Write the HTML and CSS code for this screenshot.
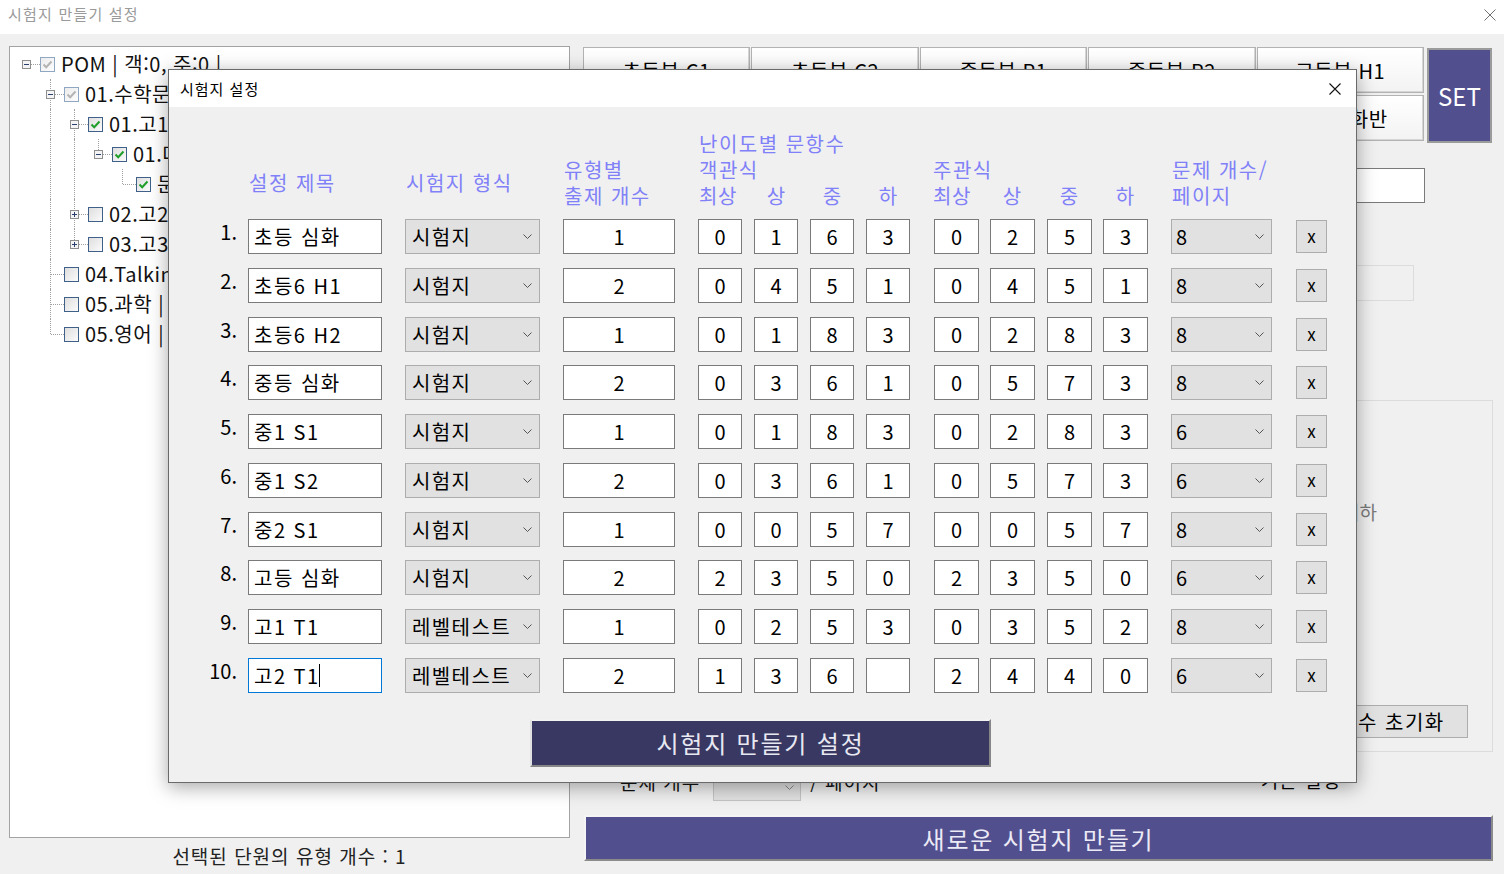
FILE: index.html
```html
<!DOCTYPE html>
<html lang="ko">
<head>
<meta charset="utf-8">
<title>시험지 만들기 설정</title>
<link rel="stylesheet" href="styles.css">
</head>
<body>
<div class="window">
  <div class="titlebar">
    <span class="title">시험지 만들기 설정</span>
    <svg class="win-close" width="12" height="12" viewBox="0 0 12 12"><path d="M0.5 0.5 L11.5 11.5 M11.5 0.5 L0.5 11.5" stroke="#707070" stroke-width="1" fill="none"/></svg>
  </div>

  <div class="content">
    <div class="leftcol">
      <div class="tree">
        <div class="node">
          <span class="cell h"><svg class="exp" width="9" height="9" viewBox="0 0 9 9"><rect x="0.5" y="0.5" width="8" height="8" fill="#f4f4f4" stroke="#8e8e8e"/><path d="M2 4.5 H7" stroke="#2a3f6e"/></svg></span>
          <span class="cb gray"><svg width="13" height="13" viewBox="0 0 13 13"><path d="M2.5 6.5 L5.2 9.2 L10.5 3.5" stroke="#b4b4b4" stroke-width="2" fill="none"/></svg></span>
          <span class="label">POM | 객:0, 주:0 |</span>
        </div>
        <div class="node">
          <span class="cell"></span>
          <span class="cell up down h"><svg class="exp" width="9" height="9" viewBox="0 0 9 9"><rect x="0.5" y="0.5" width="8" height="8" fill="#f4f4f4" stroke="#8e8e8e"/><path d="M2 4.5 H7" stroke="#2a3f6e"/></svg></span>
          <span class="cb gray"><svg width="13" height="13" viewBox="0 0 13 13"><path d="M2.5 6.5 L5.2 9.2 L10.5 3.5" stroke="#b4b4b4" stroke-width="2" fill="none"/></svg></span>
          <span class="label">01.수학문</span>
        </div>
        <div class="node">
          <span class="cell"></span>
          <span class="cell v"></span>
          <span class="cell up down h"><svg class="exp" width="9" height="9" viewBox="0 0 9 9"><rect x="0.5" y="0.5" width="8" height="8" fill="#f4f4f4" stroke="#8e8e8e"/><path d="M2 4.5 H7" stroke="#2a3f6e"/></svg></span>
          <span class="cb"><svg width="13" height="13" viewBox="0 0 13 13"><path d="M2.5 6.5 L5.2 9.2 L10.5 3.5" stroke="#1f9e2a" stroke-width="2" fill="none"/></svg></span>
          <span class="label">01.고1</span>
        </div>
        <div class="node">
          <span class="cell"></span>
          <span class="cell v"></span>
          <span class="cell v"></span>
          <span class="cell up h"><svg class="exp" width="9" height="9" viewBox="0 0 9 9"><rect x="0.5" y="0.5" width="8" height="8" fill="#f4f4f4" stroke="#8e8e8e"/><path d="M2 4.5 H7" stroke="#2a3f6e"/></svg></span>
          <span class="cb"><svg width="13" height="13" viewBox="0 0 13 13"><path d="M2.5 6.5 L5.2 9.2 L10.5 3.5" stroke="#1f9e2a" stroke-width="2" fill="none"/></svg></span>
          <span class="label">01.다항식</span>
        </div>
        <div class="node">
          <span class="cell"></span>
          <span class="cell v"></span>
          <span class="cell v"></span>
          <span class="cell"></span>
          <span class="cell up h"></span>
          <span class="cb"><svg width="13" height="13" viewBox="0 0 13 13"><path d="M2.5 6.5 L5.2 9.2 L10.5 3.5" stroke="#1f9e2a" stroke-width="2" fill="none"/></svg></span>
          <span class="label">문제</span>
        </div>
        <div class="node">
          <span class="cell"></span>
          <span class="cell v"></span>
          <span class="cell up down h"><svg class="exp" width="9" height="9" viewBox="0 0 9 9"><rect x="0.5" y="0.5" width="8" height="8" fill="#f4f4f4" stroke="#8e8e8e"/><path d="M2 4.5 H7 M4.5 2 V7" stroke="#2a3f6e"/></svg></span>
          <span class="cb"></span>
          <span class="label">02.고2</span>
        </div>
        <div class="node">
          <span class="cell"></span>
          <span class="cell v"></span>
          <span class="cell up h"><svg class="exp" width="9" height="9" viewBox="0 0 9 9"><rect x="0.5" y="0.5" width="8" height="8" fill="#f4f4f4" stroke="#8e8e8e"/><path d="M2 4.5 H7 M4.5 2 V7" stroke="#2a3f6e"/></svg></span>
          <span class="cb"></span>
          <span class="label">03.고3</span>
        </div>
        <div class="node">
          <span class="cell"></span>
          <span class="cell up down h"></span>
          <span class="cb"></span>
          <span class="label">04.Talking</span>
        </div>
        <div class="node">
          <span class="cell"></span>
          <span class="cell up down h"></span>
          <span class="cb"></span>
          <span class="label">05.과학 |</span>
        </div>
        <div class="node">
          <span class="cell"></span>
          <span class="cell up h"></span>
          <span class="cb"></span>
          <span class="label">05.영어 |</span>
        </div>
      </div>
      <div class="count-label">선택된 단원의 유형 개수 : 1</div>
    </div>

    <div class="rightcol">
      <div class="tabs-area">
        <div class="tabs">
          <div class="tab">초등부 C1</div>
          <div class="tab">초등부 C2</div>
          <div class="tab">중등부 P1</div>
          <div class="tab">중등부 P2</div>
          <div class="tab">고등부 H1</div>
          <div class="tab">초등 심화반</div>
          <div class="tab">초등 기본반</div>
          <div class="tab">중등 심화반</div>
          <div class="tab">중등 기본반</div>
          <div class="tab">고등심화반</div>
        </div>
        <div class="set-btn">SET</div>
      </div>
      <div class="name-row">
        <div class="name-box"></div>
      </div>
      <div class="faint-row">
        <div class="faint-box"></div>
      </div>
      <div class="group">
        <div class="group-line">이하</div>
        <div class="reset-btn">문항수 초기화</div>
      </div>
      <div class="page-row">
        <span class="field-label up">문제 개수</span>
        <div class="mini-sel"><svg width="9" height="5" viewBox="0 0 9 5"><path d="M0.5 0.5 L4.5 4.5 L8.5 0.5" stroke="#8a8a8a" fill="none"/></svg></div>
        <span class="field-label up">/ 페이지</span>
        <span class="page-right">기본 설정</span>
      </div>
      <div class="new-btn">새로운 시험지 만들기</div>
    </div>
  </div>

  <div class="dialog">
    <div class="dlg-title">
      <span class="dlg-name">시험지 설정</span>
      <svg width="12" height="12" viewBox="0 0 12 12"><path d="M0.5 0.5 L11.5 11.5 M11.5 0.5 L0.5 11.5" stroke="#111" stroke-width="1.1" fill="none"/></svg>
    </div>
    <div class="dlg-body">
      <div class="hdr-grid">
        <div class="hd col2 rows23 mid">설정 제목</div>
        <div class="hd col3 rows23 mid">시험지 형식</div>
        <div class="hd col4 rows23">유형별<br>출제 개수</div>
        <div class="hd span-diff">난이도별 문항수</div>
        <div class="hd span-obj">객관식</div>
        <div class="hd span-sub">주관식</div>
        <div class="hd col13 rows23">문제 개수/<br>페이지</div>
        <div class="hd lv col5 first">최상</div>
        <div class="hd lv col6">상</div>
        <div class="hd lv col7">중</div>
        <div class="hd lv col8">하</div>
        <div class="hd lv col9 first sub">최상</div>
        <div class="hd lv col10">상</div>
        <div class="hd lv col11">중</div>
        <div class="hd lv col12">하</div>
      </div>

      <div class="rows">
        <div class="num">1.</div><div class="tbox">초등 심화</div><div class="sel">시험지<svg width="9" height="5" viewBox="0 0 9 5"><path d="M0.5 0.5 L4.5 4.5 L8.5 0.5" stroke="#555" fill="none"/></svg></div><div class="cnt">1</div>
        <div class="nb">0</div><div class="nb">1</div><div class="nb">6</div><div class="nb">3</div>
        <div class="nb">0</div><div class="nb">2</div><div class="nb">5</div><div class="nb">3</div>
        <div class="psel">8<svg width="9" height="5" viewBox="0 0 9 5"><path d="M0.5 0.5 L4.5 4.5 L8.5 0.5" stroke="#555" fill="none"/></svg></div><div class="xbtn">x</div>

        <div class="num">2.</div><div class="tbox">초등6 H1</div><div class="sel">시험지<svg width="9" height="5" viewBox="0 0 9 5"><path d="M0.5 0.5 L4.5 4.5 L8.5 0.5" stroke="#555" fill="none"/></svg></div><div class="cnt">2</div>
        <div class="nb">0</div><div class="nb">4</div><div class="nb">5</div><div class="nb">1</div>
        <div class="nb">0</div><div class="nb">4</div><div class="nb">5</div><div class="nb">1</div>
        <div class="psel">8<svg width="9" height="5" viewBox="0 0 9 5"><path d="M0.5 0.5 L4.5 4.5 L8.5 0.5" stroke="#555" fill="none"/></svg></div><div class="xbtn">x</div>

        <div class="num">3.</div><div class="tbox">초등6 H2</div><div class="sel">시험지<svg width="9" height="5" viewBox="0 0 9 5"><path d="M0.5 0.5 L4.5 4.5 L8.5 0.5" stroke="#555" fill="none"/></svg></div><div class="cnt">1</div>
        <div class="nb">0</div><div class="nb">1</div><div class="nb">8</div><div class="nb">3</div>
        <div class="nb">0</div><div class="nb">2</div><div class="nb">8</div><div class="nb">3</div>
        <div class="psel">8<svg width="9" height="5" viewBox="0 0 9 5"><path d="M0.5 0.5 L4.5 4.5 L8.5 0.5" stroke="#555" fill="none"/></svg></div><div class="xbtn">x</div>

        <div class="num">4.</div><div class="tbox">중등 심화</div><div class="sel">시험지<svg width="9" height="5" viewBox="0 0 9 5"><path d="M0.5 0.5 L4.5 4.5 L8.5 0.5" stroke="#555" fill="none"/></svg></div><div class="cnt">2</div>
        <div class="nb">0</div><div class="nb">3</div><div class="nb">6</div><div class="nb">1</div>
        <div class="nb">0</div><div class="nb">5</div><div class="nb">7</div><div class="nb">3</div>
        <div class="psel">8<svg width="9" height="5" viewBox="0 0 9 5"><path d="M0.5 0.5 L4.5 4.5 L8.5 0.5" stroke="#555" fill="none"/></svg></div><div class="xbtn">x</div>

        <div class="num">5.</div><div class="tbox">중1 S1</div><div class="sel">시험지<svg width="9" height="5" viewBox="0 0 9 5"><path d="M0.5 0.5 L4.5 4.5 L8.5 0.5" stroke="#555" fill="none"/></svg></div><div class="cnt">1</div>
        <div class="nb">0</div><div class="nb">1</div><div class="nb">8</div><div class="nb">3</div>
        <div class="nb">0</div><div class="nb">2</div><div class="nb">8</div><div class="nb">3</div>
        <div class="psel">6<svg width="9" height="5" viewBox="0 0 9 5"><path d="M0.5 0.5 L4.5 4.5 L8.5 0.5" stroke="#555" fill="none"/></svg></div><div class="xbtn">x</div>

        <div class="num">6.</div><div class="tbox">중1 S2</div><div class="sel">시험지<svg width="9" height="5" viewBox="0 0 9 5"><path d="M0.5 0.5 L4.5 4.5 L8.5 0.5" stroke="#555" fill="none"/></svg></div><div class="cnt">2</div>
        <div class="nb">0</div><div class="nb">3</div><div class="nb">6</div><div class="nb">1</div>
        <div class="nb">0</div><div class="nb">5</div><div class="nb">7</div><div class="nb">3</div>
        <div class="psel">6<svg width="9" height="5" viewBox="0 0 9 5"><path d="M0.5 0.5 L4.5 4.5 L8.5 0.5" stroke="#555" fill="none"/></svg></div><div class="xbtn">x</div>

        <div class="num">7.</div><div class="tbox">중2 S1</div><div class="sel">시험지<svg width="9" height="5" viewBox="0 0 9 5"><path d="M0.5 0.5 L4.5 4.5 L8.5 0.5" stroke="#555" fill="none"/></svg></div><div class="cnt">1</div>
        <div class="nb">0</div><div class="nb">0</div><div class="nb">5</div><div class="nb">7</div>
        <div class="nb">0</div><div class="nb">0</div><div class="nb">5</div><div class="nb">7</div>
        <div class="psel">8<svg width="9" height="5" viewBox="0 0 9 5"><path d="M0.5 0.5 L4.5 4.5 L8.5 0.5" stroke="#555" fill="none"/></svg></div><div class="xbtn">x</div>

        <div class="num">8.</div><div class="tbox">고등 심화</div><div class="sel">시험지<svg width="9" height="5" viewBox="0 0 9 5"><path d="M0.5 0.5 L4.5 4.5 L8.5 0.5" stroke="#555" fill="none"/></svg></div><div class="cnt">2</div>
        <div class="nb">2</div><div class="nb">3</div><div class="nb">5</div><div class="nb">0</div>
        <div class="nb">2</div><div class="nb">3</div><div class="nb">5</div><div class="nb">0</div>
        <div class="psel">6<svg width="9" height="5" viewBox="0 0 9 5"><path d="M0.5 0.5 L4.5 4.5 L8.5 0.5" stroke="#555" fill="none"/></svg></div><div class="xbtn">x</div>

        <div class="num">9.</div><div class="tbox">고1 T1</div><div class="sel">레벨테스트<svg width="9" height="5" viewBox="0 0 9 5"><path d="M0.5 0.5 L4.5 4.5 L8.5 0.5" stroke="#555" fill="none"/></svg></div><div class="cnt">1</div>
        <div class="nb">0</div><div class="nb">2</div><div class="nb">5</div><div class="nb">3</div>
        <div class="nb">0</div><div class="nb">3</div><div class="nb">5</div><div class="nb">2</div>
        <div class="psel">8<svg width="9" height="5" viewBox="0 0 9 5"><path d="M0.5 0.5 L4.5 4.5 L8.5 0.5" stroke="#555" fill="none"/></svg></div><div class="xbtn">x</div>

        <div class="num">10.</div><div class="tbox focus">고2 T1<span class="caret"></span></div><div class="sel">레벨테스트<svg width="9" height="5" viewBox="0 0 9 5"><path d="M0.5 0.5 L4.5 4.5 L8.5 0.5" stroke="#555" fill="none"/></svg></div><div class="cnt">2</div>
        <div class="nb">1</div><div class="nb">3</div><div class="nb">6</div><div class="nb"></div>
        <div class="nb">2</div><div class="nb">4</div><div class="nb">4</div><div class="nb">0</div>
        <div class="psel">6<svg width="9" height="5" viewBox="0 0 9 5"><path d="M0.5 0.5 L4.5 4.5 L8.5 0.5" stroke="#555" fill="none"/></svg></div><div class="xbtn">x</div>
      </div>

      <div class="dlg-btn">시험지 만들기 설정</div>
    </div>
  </div>
</div>
</body>
</html>
```

FILE: styles.css
```css
* { box-sizing: border-box; }
html, body { margin: 0; padding: 0; }
body {
  width: 1504px;
  height: 874px;
  overflow: hidden;
  background: #f0f0f0;
  font-family: "Noto Sans CJK KR", "Noto Sans", sans-serif;
  color: #000;
}
.window { position: relative; width: 1504px; height: 874px; }

/* main title bar */
.titlebar {
  height: 34px;
  background: #fff;
  display: flex;
  justify-content: space-between;
  align-items: flex-start;
  padding: 3px 8px 0 8px;
}
.titlebar .title { font-size: 15px; line-height: 22px; color: #9a9a9a; letter-spacing: 1.2px; }
.win-close { margin-top: 6px; }

/* content */
.content {
  display: flex;
  gap: 13px;
  padding: 12px 11px 0 9px;
  height: 840px;
}
.leftcol { width: 561px; display: flex; flex-direction: column; }
.tree {
  height: 792px;
  background: #fff;
  border: 1px solid #a3a3a3;
  padding: 2px 0 0 4px;
  overflow: hidden;
}
.node { display: flex; align-items: center; height: 30px; }
.cell {
  position: relative;
  width: 24px;
  height: 30px;
  flex-shrink: 0;
  padding: 11px 0 0 8px;
}
.cell::before, .cell::after { content: ""; position: absolute; }
.cell.v::before { left: 12px; top: 0; bottom: 0; border-left: 1px dotted #a0a0a0; }
.cell.up::before { left: 12px; top: 0; height: 15px; border-left: 1px dotted #a0a0a0; }
.cell.down::before { left: 12px; top: 15px; bottom: 0; border-left: 1px dotted #a0a0a0; }
.cell.up.down::before { top: 0; bottom: 0; height: auto; }
.cell.h::after { left: 13px; right: -2px; top: 15px; border-top: 1px dotted #a0a0a0; }
.exp { display: block; position: relative; z-index: 1; }
.cb {
  width: 15px;
  height: 15px;
  margin-left: 2px;
  flex-shrink: 0;
  border: 1px solid #3f6189;
  background: linear-gradient(135deg, #dedede, #fbfbfb);
  display: flex;
  align-items: center;
  justify-content: center;
  position: relative;
  z-index: 1;
}
.cb svg { display: block; }
.cb.gray { border-color: #8fa7c3; background: linear-gradient(135deg, #ececec, #fdfdfd); }
.label { margin-left: 6px; font-size: 20px; line-height: 30px; white-space: nowrap; color: #111; letter-spacing: 0.5px; }
.count-label {
  flex: 1;
  display: flex;
  align-items: center;
  justify-content: center;
  font-size: 19px;
  color: #222;
  padding-bottom: 2px;
  letter-spacing: 1px;
}

/* right column (mostly covered by the dialog) */
.rightcol { flex: 1; display: flex; flex-direction: column; }
.tabs-area { display: flex; gap: 3px; margin-top: 1px; height: 96px; }
.tabs {
  display: grid;
  grid-template-columns: repeat(5, 167.4px);
  grid-template-rows: 46px 46px;
  column-gap: 1px;
  row-gap: 2px;
}
.tab {
  background: linear-gradient(#ffffff, #f3f3f3);
  border: 1px solid #b3b3b3;
  box-shadow: inset -1px -1px 0 #d6d6d6;
  display: flex;
  align-items: center;
  justify-content: center;
  font-size: 20px;
  white-space: nowrap;
  letter-spacing: 0.6px;
}
.set-btn {
  width: 65px;
  height: 95px;
  margin-top: 1px;
  background: #524f8f;
  border: 2px solid #9b9b9b;
  color: #fff;
  font-size: 24px;
  display: flex;
  align-items: center;
  justify-content: center;
}
.name-row {
  display: flex;
  justify-content: flex-end;
  align-items: center;
  margin-top: 25px;
  padding-right: 68px;
}
.field-label { font-size: 19px; color: #111; white-space: nowrap; letter-spacing: 1px; }
.field-label.up { margin-bottom: 12px; }
.name-box { width: 225px; height: 35px; background: #fff; border: 1px solid #7a7a7a; }
.faint-row { display: flex; justify-content: flex-end; padding-right: 79px; margin-top: 62px; }
.faint-box { width: 220px; height: 36px; border: 1px solid #dcdcdc; background: #f0f0f0; }
.group {
  margin-top: 99px;
  height: 352px;
  border: 1px solid #dcdcdc;
  display: flex;
  flex-direction: column;
  align-items: flex-end;
  padding: 95px 115px 13px 0;
}
.group-line { font-size: 19px; color: #7a7a7a; line-height: 32px; }
.reset-btn {
  margin-top: auto;
  margin-right: -91px;
  width: 173px;
  height: 33px;
  background: #e1e1e1;
  border: 1px solid #adadad;
  display: flex;
  align-items: center;
  justify-content: center;
  font-size: 20px;
  letter-spacing: 1.5px;
}
.page-row {
  display: flex;
  align-items: center;
  margin-top: 21px;
  height: 28px;
  padding-left: 37px;
}
.mini-sel {
  width: 88px;
  height: 28px;
  margin: 0 9px 0 13px;
  background: #e1e1e1;
  border: 1px solid #c4c4c4;
  display: flex;
  justify-content: flex-end;
  align-items: center;
  padding-right: 6px;
}
.page-right { margin-left: auto; margin-right: 152px; font-size: 19px; margin-bottom: 16px; letter-spacing: 1px; }
.new-btn {
  margin-top: 14px;
  margin-left: 1px;
  height: 46px;
  background: #524f8f;
  border-top: 2px solid #f4f4f4;
  border-left: 2px solid #f4f4f4;
  border-right: 2px solid #8a8a8a;
  border-bottom: 2px solid #8a8a8a;
  color: #ecebf5;
  font-size: 24px;
  letter-spacing: 1.8px;
  display: flex;
  align-items: center;
  justify-content: center;
}

/* dialog */
.dialog {
  position: absolute;
  left: 168px;
  top: 69px;
  width: 1189px;
  height: 714px;
  background: #f0f0f0;
  border: 1px solid #6a6a6a;
  box-shadow: 0 4px 18px rgba(0, 0, 0, 0.35);
  display: flex;
  flex-direction: column;
}
.dlg-title {
  height: 37px;
  background: #fff;
  display: flex;
  justify-content: space-between;
  align-items: center;
  padding: 0 15px 0 11px;
  font-size: 15px;
}
.dlg-name { letter-spacing: 1px; }
.dlg-body { padding-top: 24px; }

.hdr-grid, .rows {
  display: grid;
  grid-template-columns: 79px 157px 158px 135px 56px 56px 56px 68px 56px 57px 56px 68px 125px 31px;
}
.hdr-grid {
  grid-template-rows: 26px 26px 26px;
  color: #8080f8;
  font-size: 20px;
  line-height: 26px;
  letter-spacing: 1.5px;
}
.hd { padding-left: 1px; white-space: nowrap; justify-self: start; }
.col2 { grid-column: 2; }
.col3 { grid-column: 3; }
.col4 { grid-column: 4; }
.col5 { grid-column: 5; }
.col6 { grid-column: 6; }
.col7 { grid-column: 7; }
.col8 { grid-column: 8; }
.col9 { grid-column: 9; }
.col10 { grid-column: 10; }
.col11 { grid-column: 11; }
.col12 { grid-column: 12; }
.col13 { grid-column: 13 / span 2; }
.rows23 { grid-row: 2 / 4; }
.mid { align-self: center; }
.span-diff { grid-column: 5 / 13; grid-row: 1; }
.span-obj { grid-column: 5 / 9; grid-row: 2; }
.span-sub { grid-column: 9 / 13; grid-row: 2; margin-left: -2px; }
.lv { grid-row: 3; width: 44px; text-align: center; padding-left: 0; letter-spacing: 0; }
.lv.first { text-align: left; padding-left: 1px; letter-spacing: 0.5px; }
.lv.sub { margin-left: -2px; }

.rows {
  margin-top: 10px;
  grid-auto-rows: 35px;
  row-gap: 13.78px;
  font-size: 20px;
}
.num { text-align: right; padding-right: 11px; line-height: 26px; align-self: start; }
.tbox, .sel, .cnt, .nb, .psel {
  height: 35px;
  display: flex;
  align-items: center;
  white-space: nowrap;
}
.tbox { width: 134px; background: #fff; border: 1px solid #7a7a7a; padding: 0 5px; letter-spacing: 1.5px; }
.tbox.focus { border-color: #0078d7; }
.caret { display: inline-block; width: 1px; height: 23px; background: #000; margin-left: -1px; }
.sel, .psel {
  background: #e1e1e1;
  border: 1px solid #adadad;
  justify-content: space-between;
  padding: 0 7px 0 6px;
}
.sel { width: 135px; letter-spacing: 1.4px; }
.psel { width: 101px; padding-left: 4px; }
.cnt { width: 112px; background: #fff; border: 1px solid #7a7a7a; justify-content: center; }
.nb { width: 44px; background: #fff; border: 1px solid #7a7a7a; justify-content: center; }
.nb:nth-child(14n+9), .nb:nth-child(14n+10), .nb:nth-child(14n+11), .nb:nth-child(14n+12) { width: 45px; }
.xbtn {
  width: 31px;
  height: 33px;
  align-self: center;
  background: #e1e1e1;
  border: 1px solid #adadad;
  display: flex;
  align-items: center;
  justify-content: center;
  font-size: 17px;
  padding-bottom: 2px;
}

.dlg-btn {
  margin-top: 26px;
  margin-left: 361px;
  width: 461px;
  height: 48px;
  background: #383862;
  border-top: 2px solid #f2f2f2;
  border-left: 2px solid #e0e0e0;
  border-right: 2px solid #868686;
  border-bottom: 2px solid #868686;
  color: #e8e8f2;
  font-size: 24px;
  letter-spacing: 1.8px;
  display: flex;
  align-items: center;
  justify-content: center;
}
```
